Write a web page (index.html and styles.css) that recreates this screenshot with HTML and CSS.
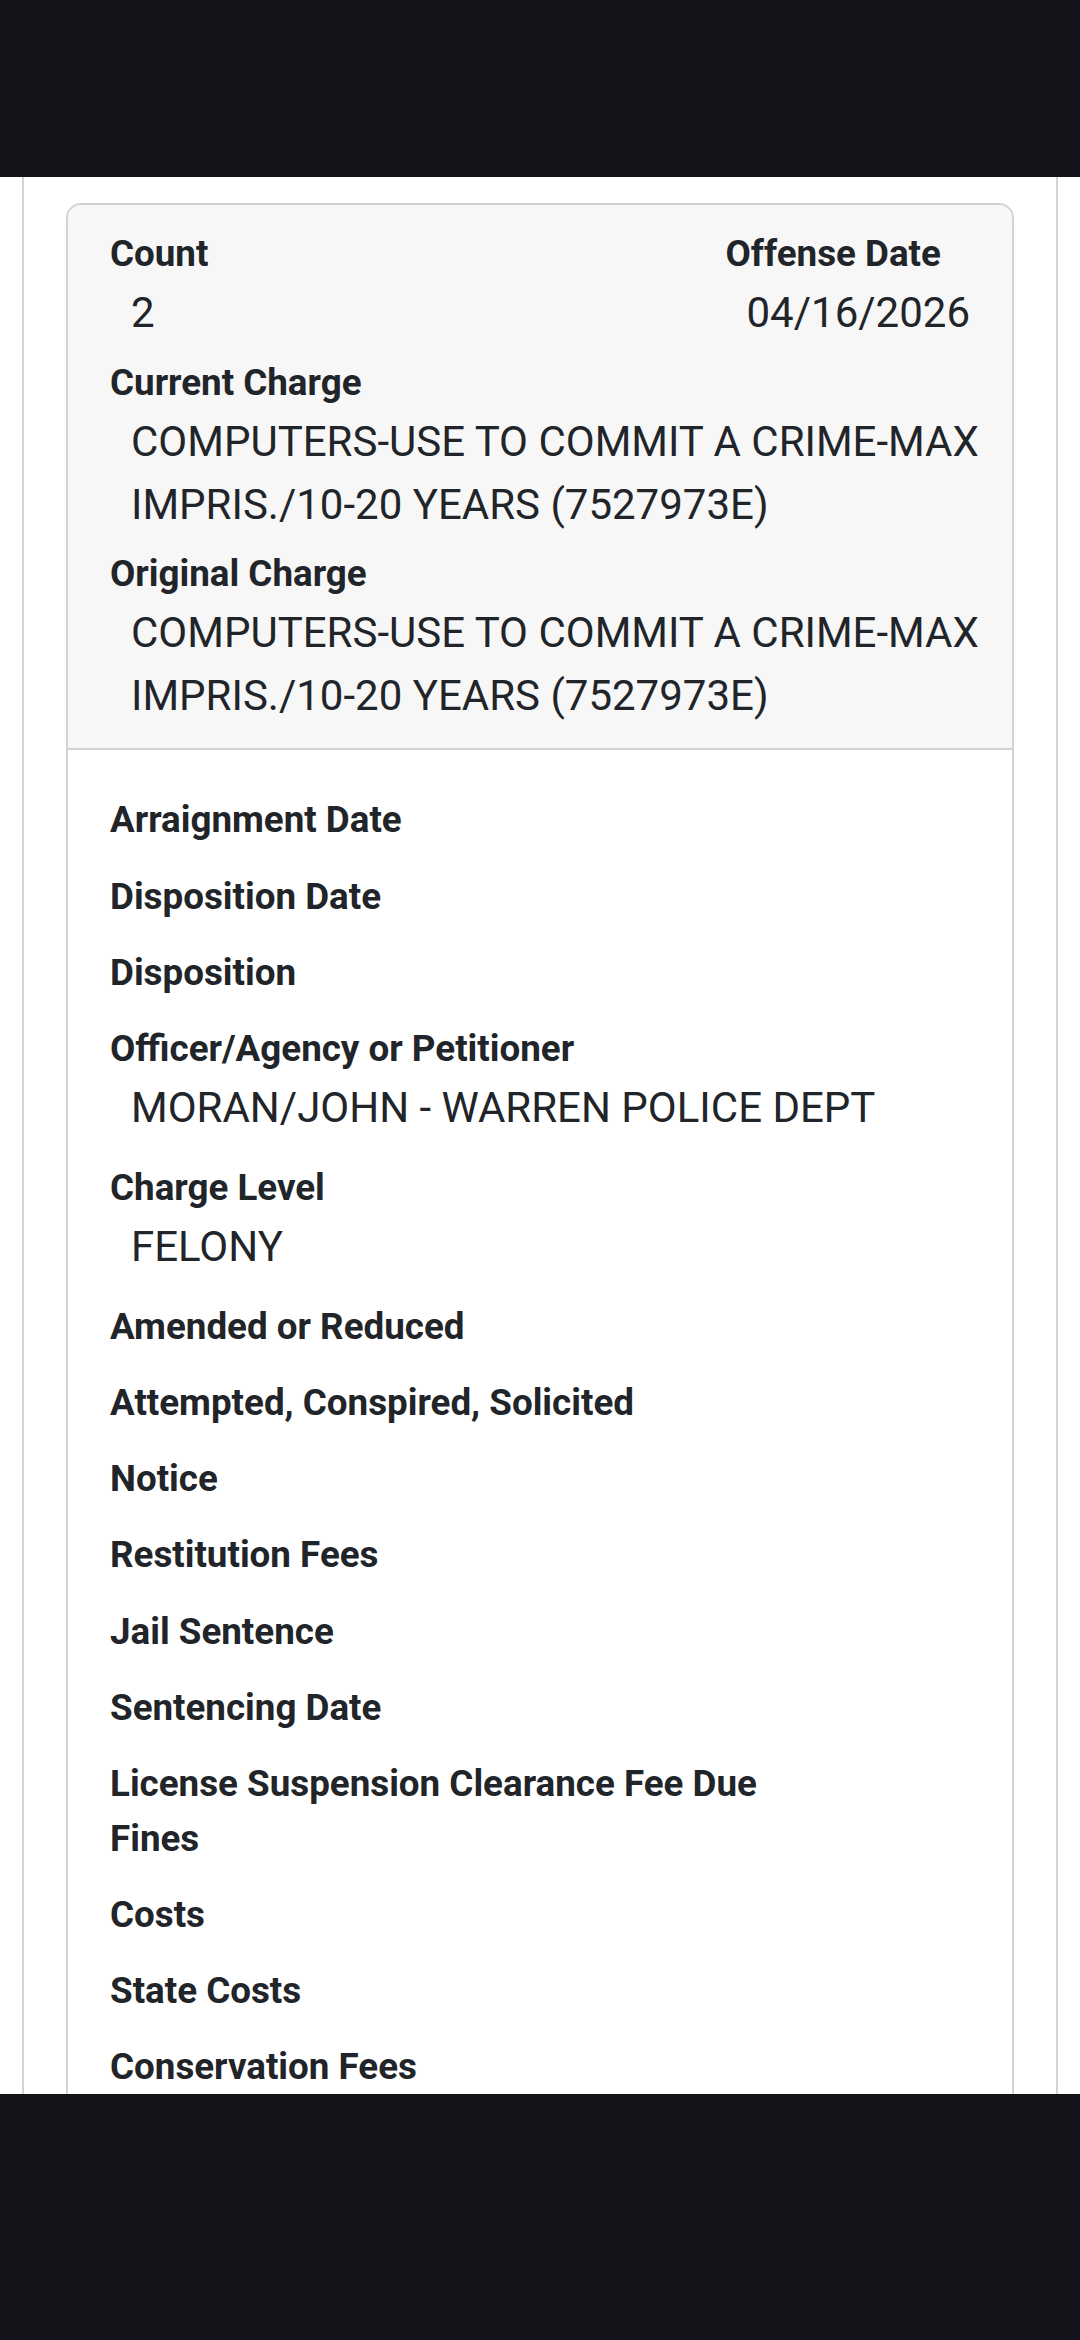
FILE: index.html
```html
<!DOCTYPE html>
<html lang="en">
<head>
<meta charset="utf-8">
<title>Charge Detail</title>
<link rel="stylesheet" href="styles.css">
</head>
<body>
<div class="screen">
  <header class="topbar"></header>
  <main class="viewport">
    <section class="panel">
      <article class="card">
        <div class="card-header">
          <div class="head-row">
            <div class="field">
              <div class="label">Count</div>
              <div class="value">2</div>
            </div>
            <div class="field">
              <div class="label">Offense Date</div>
              <div class="value">04/16/2026</div>
            </div>
          </div>
          <div class="hfield">
            <div class="label">Current Charge</div>
            <div class="value wide">COMPUTERS-USE TO COMMIT A CRIME-MAX IMPRIS./10-20 YEARS (7527973E)</div>
          </div>
          <div class="hfield last">
            <div class="label">Original Charge</div>
            <div class="value wide">COMPUTERS-USE TO COMMIT A CRIME-MAX IMPRIS./10-20 YEARS (7527973E)</div>
          </div>
        </div>
        <div class="card-body">
          <div class="bfield"><div class="label">Arraignment Date</div></div>
          <div class="bfield"><div class="label">Disposition Date</div></div>
          <div class="bfield"><div class="label">Disposition</div></div>
          <div class="bfield">
            <div class="label">Officer/Agency or Petitioner</div>
            <div class="value">MORAN/JOHN - WARREN POLICE DEPT</div>
          </div>
          <div class="bfield">
            <div class="label">Charge Level</div>
            <div class="value">FELONY</div>
          </div>
          <div class="bfield"><div class="label">Amended or Reduced</div></div>
          <div class="bfield"><div class="label">Attempted, Conspired, Solicited</div></div>
          <div class="bfield"><div class="label">Notice</div></div>
          <div class="bfield"><div class="label">Restitution Fees</div></div>
          <div class="bfield"><div class="label">Jail Sentence</div></div>
          <div class="bfield"><div class="label">Sentencing Date</div></div>
          <div class="bfield tight"><div class="label">License Suspension Clearance Fee Due</div></div>
          <div class="bfield"><div class="label">Fines</div></div>
          <div class="bfield"><div class="label">Costs</div></div>
          <div class="bfield"><div class="label">State Costs</div></div>
          <div class="bfield"><div class="label">Conservation Fees</div></div>
        </div>
      </article>
    </section>
  </main>
  <footer class="navbar"></footer>
</div>
</body>
</html>
```

FILE: styles.css
```css
* {
  box-sizing: border-box;
}

html, body {
  margin: 0;
  padding: 0;
  background: #ffffff;
}

body {
  font-family: Roboto, "Noto Sans", "Liberation Sans", sans-serif;
  color: #212529;
}

.screen {
  width: 1080px;
  height: 2340px;
  display: flex;
  flex-direction: column;
  overflow: hidden;
}

.topbar {
  height: 177px;
  flex: 0 0 177px;
  background: #131419;
}

.navbar {
  height: 246px;
  flex: 0 0 246px;
  background: #131419;
}

.viewport {
  flex: 1 1 auto;
  overflow: hidden;
  background: #ffffff;
}

.panel {
  margin: 0 22px;
  min-height: 100%;
  border-left: 2px solid #d4d4d4;
  border-right: 2px solid #d4d4d4;
  padding: 26px 42px 0;
}

.card {
  border: 2px solid #d2d2d2;
  border-radius: 15px;
  overflow: hidden;
  background: #ffffff;
}

.card-header {
  background: #f7f7f7;
  border-bottom: 2px solid #d2d2d2;
  padding: 21px 42px;
}

.head-row {
  display: flex;
  justify-content: space-between;
  align-items: flex-start;
  margin-bottom: 10.5px;
}

.hfield {
  margin-bottom: 10.5px;
}

.hfield.last {
  margin-bottom: 0;
}

.label {
  font-weight: 700;
  font-size: 36.75px;
  line-height: 1.5;
}

.value {
  font-weight: 400;
  font-size: 42px;
  line-height: 1.5;
  padding-left: 21px;
}

.value.wide {
  margin-right: -30px;
}

.card-body {
  padding: 42px;
}

.bfield {
  margin-bottom: 21px;
}

.bfield.tight {
  margin-bottom: 0;
}
```
